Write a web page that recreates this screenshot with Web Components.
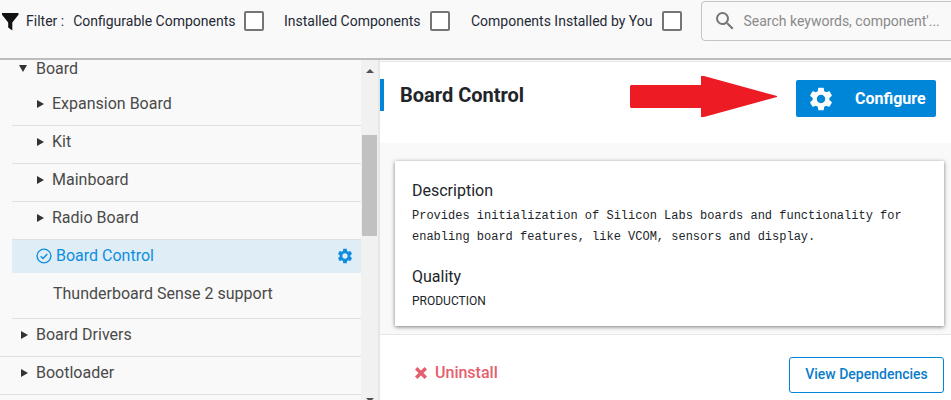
<!DOCTYPE html>
<html>
<head>
<meta charset="utf-8">
<style>
  html, body { margin: 0; padding: 0; height: 400px; overflow: hidden; background: #fff; font-family: Roboto, "Liberation Sans", sans-serif; }
</style>
</head>
<body>
<template id="filter-check">
  <style>
    :host { display: flex; flex: none; align-items: center; gap: 9px; font-size: 14px; color: #1f2a36; white-space: nowrap; }
    .box { width: 16px; height: 16px; border: 2px solid #757575; border-radius: 2px; background: #fff; }
  </style>
  <slot></slot><span class="box"></span>
</template>

<template id="tree-row">
  <style>
    :host { display: flex; align-items: center; height: 37px; margin-bottom: 1px; padding-bottom: 6px; font-size: 16px; color: #4a4a4a; box-sizing: border-box; }
    :host([divided]) { box-shadow: 0 1px 0 #e0e0e0; }
    .arrow { width: 0; height: 0; margin-right: 8px; border-left: 7px solid #333; border-top: 4.5px solid transparent; border-bottom: 4.5px solid transparent; }
    :host([open]) .arrow { margin-right: 9px; border-left: 4.5px solid transparent; border-right: 4.5px solid transparent; border-top: 7px solid #333; border-bottom: 0; }
    :host([leaf]) .arrow { display: none; }
  </style>
  <span class="arrow"></span><slot></slot>
</template>

<template id="top-bar">
  <style>
    :host { display: flex; align-items: center; height: 58px; box-sizing: border-box; background: #f9f9f9; padding: 0 0 17px 1px; font-size: 14px; color: #1f2a36; overflow: hidden; white-space: nowrap; }
    svg { display: block; flex: none; }
    .label { flex: none; margin-left: 5px; margin-right: 9px; }
    .checks { display: flex; flex: none; gap: 20.5px; }
    .search { flex: none; width: 300px; height: 40px; margin-left: 19px; border: 1px solid #c4c4c4; border-radius: 4px; box-sizing: border-box; display: flex; align-items: center; padding-left: 11px; gap: 6px; color: #8a8a8a; background: #f9f9f9; }
  </style>
  <svg width="20" height="20" viewBox="0 0 20 20"><path d="M1 2h16.5v1.8L11.3 11.5v8L7.2 16.6v-5.1L1 3.8z" fill="#111"/></svg>
  <span class="label">Filter :</span>
  <div class="checks"><slot></slot></div>
  <div class="search">
    <svg width="24" height="24" viewBox="0 0 24 24"><path fill="#757575" d="M15.5 14h-.79l-.28-.27A6.47 6.47 0 0 0 16 9.5 6.5 6.5 0 1 0 9.5 16c1.61 0 3.09-.59 4.23-1.57l.27.28v.79l5 4.99L20.49 19l-4.99-5zm-6 0C7.01 14 5 11.99 5 9.5S7.01 5 9.5 5 14 7.01 14 9.5 11.99 14 9.5 14z"/></svg>
    <span>Search keywords, component'...</span>
  </div>
</template>

<template id="side-tree">
  <style>
    :host { display: flex; flex: none; width: 380px; height: 340px; background: #f9f9f9; }
    .list { width: 361px; flex: none; overflow: hidden; }
    .scroll { width: 17px; flex: none; background: #f1f1f1; display: flex; flex-direction: column; align-items: center; }
    .up { margin-top: 9px; width: 0; height: 0; border-left: 4px solid transparent; border-right: 4px solid transparent; border-bottom: 4px solid #505050; }
    .thumb { width: 15px; height: 101px; margin-top: 62px; background: #c1c1c1; }
    .down { margin-top: auto; margin-bottom: -2px; width: 0; height: 0; border-left: 4px solid transparent; border-right: 4px solid transparent; border-top: 4px solid #505050; }
    .gap { width: 2px; flex: none; background: #e6e6e6; }
  </style>
  <div class="list"><slot></slot></div>
  <div class="scroll"><span class="up"></span><span class="thumb"></span><span class="down"></span></div>
  <div class="gap"></div>
</template>

<template id="selected-row">
  <style>
    :host { display: flex; align-items: center; height: 33px; margin: 0 0 0 12px; padding: 0 7px 2px 24px; box-sizing: border-box; background: #deedf6; color: #0f8de0; font-size: 16px; }
    svg { display: block; flex: none; }
    .name { flex: 1; margin-left: 4px; }
  </style>
  <svg width="16" height="16" viewBox="0 0 16 16" fill="none" stroke="#0f8de0" stroke-width="1.4"><circle cx="8" cy="8" r="6.9"/><path d="M4.7 8.2l2.3 2.3 4.3-4.6"/></svg>
  <span class="name"><slot></slot></span>
  <svg width="18" height="18" viewBox="0 0 24 24"><path fill="#0f8de0" d="M19.14 12.94c.04-.3.06-.61.06-.94 0-.32-.02-.64-.07-.94l2.03-1.58a.49.49 0 0 0 .12-.61l-1.92-3.32a.488.488 0 0 0-.59-.22l-2.39.96c-.5-.38-1.03-.7-1.62-.94l-.36-2.54a.484.484 0 0 0-.48-.41h-3.84c-.24 0-.43.17-.47.41l-.36 2.54c-.59.24-1.13.57-1.62.94l-2.39-.96c-.22-.08-.47 0-.59.22L2.74 8.87c-.12.21-.08.47.12.61l2.03 1.58c-.05.3-.09.63-.09.94s.02.64.07.94l-2.03 1.58a.49.49 0 0 0-.12.61l1.92 3.32c.12.22.37.29.59.22l2.39-.96c.5.38 1.03.7 1.62.94l.36 2.54c.05.24.24.41.48.41h3.84c.24 0 .44-.17.47-.41l.36-2.54c.59-.24 1.13-.56 1.62-.94l2.39.96c.22.08.47 0 .59-.22l1.92-3.32c.12-.22.07-.47-.12-.61l-2.01-1.58zM12 15.6c-1.98 0-3.6-1.62-3.6-3.6s1.62-3.6 3.6-3.6 3.6 1.62 3.6 3.6-1.62 3.6-3.6 3.6z"/></svg>
</template>

<template id="detail-head">
  <style>
    :host { display: flex; align-items: center; height: 81px; margin-top: 2px; background: #fff; flex: none; box-sizing: border-box; padding: 0 15px 0 0; position: relative; box-shadow: 0 -1px 0 #e6e6e6; }
    .bar { width: 4px; height: 32px; background: #0086d9; margin-right: 16px; margin-top: -15px; flex: none; }
    h1 { margin: -15px 0 0; font-size: 20px; font-weight: 700; color: #212529; flex: 1; }
    .cfg { width: 140px; height: 37px; margin-top: -8px; background: #0086d9; border-radius: 2px; display: flex; align-items: center; box-sizing: border-box; padding-left: 11px; color: #fff; font-weight: 700; font-size: 16px; }
    .cfg svg { display: block; width: 28px; height: 28px; margin-right: 20px; }
    .arrow { position: absolute; left: 250px; top: 14px; }
  </style>
  <span class="bar"></span>
  <h1><slot></slot></h1>
  <svg class="arrow" width="148" height="41" viewBox="0 0 148 41"><path fill="#ed1c24" d="M1 9h70V0l3 0 73 20v1L74 41h-3V32H1l-1-1V10z"/></svg>
  <div class="cfg">
    <svg viewBox="0 0 24 24"><path fill="#fff" d="M19.14 12.94c.04-.3.06-.61.06-.94 0-.32-.02-.64-.07-.94l2.03-1.58a.49.49 0 0 0 .12-.61l-1.92-3.32a.488.488 0 0 0-.59-.22l-2.39.96c-.5-.38-1.03-.7-1.62-.94l-.36-2.54a.484.484 0 0 0-.48-.41h-3.84c-.24 0-.43.17-.47.41l-.36 2.54c-.59.24-1.13.57-1.62.94l-2.39-.96c-.22-.08-.47 0-.59.22L2.74 8.87c-.12.21-.08.47.12.61l2.03 1.58c-.05.3-.09.63-.09.94s.02.64.07.94l-2.03 1.58a.49.49 0 0 0-.12.61l1.92 3.32c.12.22.37.29.59.22l2.39-.96c.5.38 1.03.7 1.62.94l.36 2.54c.05.24.24.41.48.41h3.84c.24 0 .44-.17.47-.41l.36-2.54c.59-.24 1.13-.56 1.62-.94l2.39.96c.22.08.47 0 .59-.22l1.92-3.32c.12-.22.07-.47-.12-.61l-2.01-1.58zM12 15.6c-1.98 0-3.6-1.62-3.6-3.6s1.62-3.6 3.6-3.6 3.6 1.62 3.6 3.6-1.62 3.6-3.6 3.6z"/></svg>
    <span>Configure</span>
  </div>
</template>

<template id="info-card">
  <style>
    :host { display: block; margin: 18px 7px 0 15px; height: 165px; box-sizing: border-box; background: #fff; padding: 20px 17px; box-shadow: 0 1px 4px rgba(0,0,0,.5); color: #212529; }
    h2 { margin: 0; font-size: 16px; font-weight: 400; line-height: 20px; }
    .mono { font-family: "Liberation Mono", monospace; font-size: 12px; line-height: 21px; margin: 5px 0 19px; color: #212529; }
    .small { font-size: 12px; line-height: 16px; margin-top: 6px; color: #212529; }
  </style>
  <h2>Description</h2>
  <div class="mono">Provides initialization of Silicon Labs boards and functionality for<br>enabling board features, like VCOM, sensors and display.</div>
  <h2>Quality</h2>
  <div class="small">PRODUCTION</div>
</template>

<template id="detail-foot">
  <style>
    :host { display: flex; align-items: flex-start; justify-content: space-between; height: 65px; margin-top: 9px; background: #fff; box-sizing: border-box; padding: 0 7px 0 34px; font-size: 16px; box-shadow: 0 -1px 0 #e6e6e6; }
    .rm { display: flex; align-items: center; gap: 7px; color: #e4606d; font-weight: 500; margin-top: 28px; }
    .view { width: 155px; height: 36px; margin-top: 22px; padding-bottom: 2px; box-sizing: border-box; border: 1px solid #0086d9; border-radius: 3px; color: #0b7cc9; font-size: 14px; font-weight: 500; display: flex; align-items: center; justify-content: center; }
  </style>
  <span class="rm"><svg width="14" height="14" viewBox="0 0 14 14"><path d="M2.2 2.2l9.6 9.6M11.8 2.2l-9.6 9.6" stroke="#e4606d" stroke-width="3.4"/></svg>Uninstall</span>
  <span class="view">View Dependencies</span>
</template>

<template id="app-shell">
  <style>
    :host { display: block; width: 951px; height: 400px; overflow: hidden; }
    .rule { height: 2px; background: #bdbdbd; }
    .main { display: flex; height: 340px; }
    .detail { flex: 1; display: flex; flex-direction: column; background: #f9f9f9; min-width: 0; }
  </style>
  <slot name="top"></slot>
  <div class="rule"></div>
  <div class="main">
    <slot name="tree"></slot>
    <div class="detail"><slot></slot></div>
  </div>
</template>

<app-shell>
  <top-bar slot="top">
    <filter-check style="gap:8px">Configurable Components</filter-check>
    <filter-check style="gap:10px">Installed Components</filter-check>
    <filter-check style="gap:10px">Components Installed by You</filter-check>
  </top-bar>
  <side-tree slot="tree">
    <tree-row open style="padding-left:19px;height:27px;margin-bottom:0;margin-top:-5px;padding-bottom:0">Board</tree-row>
    <tree-row divided style="margin-left:12px;padding-left:25px;height:43px;padding-bottom:0">Expansion Board</tree-row>
    <tree-row divided style="margin-left:12px;padding-left:25px">Kit</tree-row>
    <tree-row divided style="margin-left:12px;padding-left:25px">Mainboard</tree-row>
    <tree-row divided style="margin-left:12px;padding-left:25px">Radio Board</tree-row>
    <selected-row>Board Control</selected-row>
    <tree-row leaf divided style="margin-left:12px;padding-left:41px;height:45px;padding-bottom:5px">Thunderboard Sense 2 support</tree-row>
    <tree-row divided style="padding-left:21px">Board Drivers</tree-row>
    <tree-row divided style="padding-left:21px">Bootloader</tree-row>
  </side-tree>
  <detail-head>Board Control</detail-head>
  <info-card></info-card>
  <detail-foot></detail-foot>
</app-shell>

<script>
  // every element is the same: clone its template into an open shadow root
  const names = ['filter-check', 'tree-row', 'top-bar', 'side-tree', 'selected-row', 'detail-head', 'info-card', 'detail-foot', 'app-shell'];
  names.forEach(name => {
    customElements.define(name, class extends HTMLElement {
      constructor() {
        super();
        let shadowRoot = this.attachShadow({mode: 'open'});
        shadowRoot.appendChild(document.querySelector('#' + name).content.cloneNode(true));
      }
    });
  });
</script>
</body>
</html>
